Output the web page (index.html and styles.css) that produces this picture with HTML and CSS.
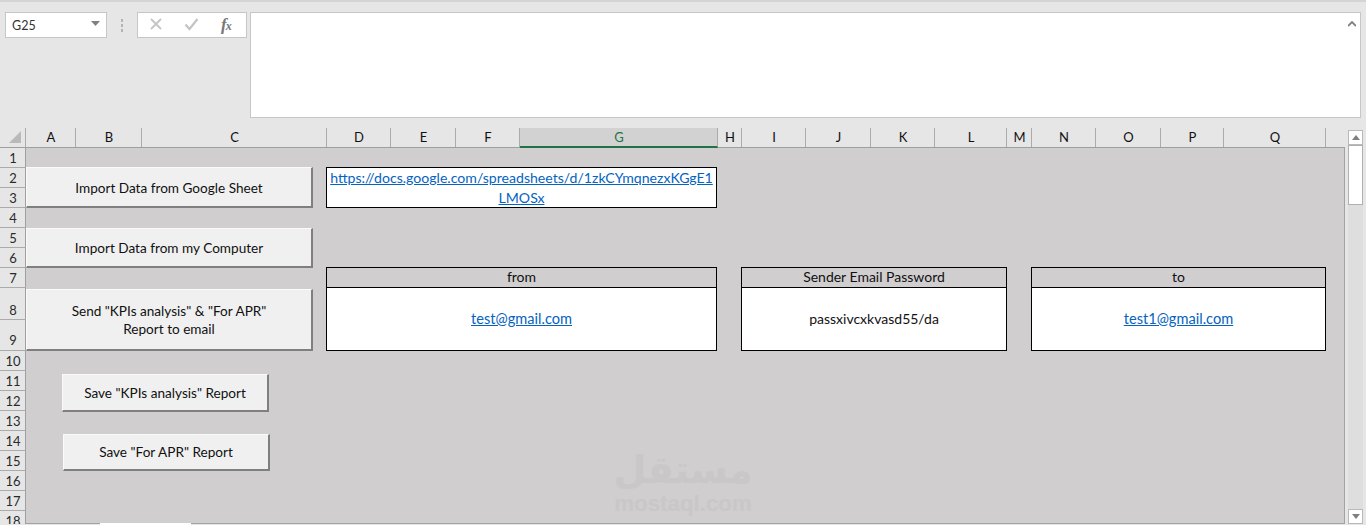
FILE: index.html
```html
<!DOCTYPE html>
<html lang="en">
<head>
<meta charset="utf-8">
<title>Excel sheet</title>
<link rel="stylesheet" href="styles.css">
</head>
<body>
<div class="app">
  <div class="formula-bar">
    <div class="namebox"><span>G25</span><svg class="caret" width="9" height="5" viewBox="0 0 9 5"><path d="M0 0h9L4.5 5z"/></svg></div>
    <div class="grip"><i></i><i></i><i></i></div>
    <div class="fx-box">
      <svg width="14" height="14" viewBox="0 0 14 14"><path d="M2 2l10 10M12 2L2 12" fill="none" stroke="#c4c4c4" stroke-width="1.8"/></svg>
      <svg width="15" height="14" viewBox="0 0 15 14"><path d="M1.5 7.5l4 4.5L13.5 2" fill="none" stroke="#c4c4c4" stroke-width="2.2"/></svg>
      <span class="fx">f<span class="fx-x">x</span></span>
    </div>
    <div class="formula-input"><svg width="8" height="6" viewBox="0 0 8 6"><path d="M0 5l4-4 4 4" fill="none" stroke="#808080" stroke-width="1.8"/></svg></div>
  </div>
  <div class="sheet-wrap">
    <div class="corner-row">
      <div class="corner"><svg width="14" height="14" viewBox="0 0 14 14"><path d="M13 1v12H1z" fill="#b9b9b9"/></svg></div>
      <div class="col-heads">
        <div class="ch">A</div><div class="ch">B</div><div class="ch">C</div><div class="ch">D</div><div class="ch">E</div><div class="ch">F</div><div class="ch active">G</div><div class="ch">H</div><div class="ch">I</div><div class="ch">J</div><div class="ch">K</div><div class="ch">L</div><div class="ch">M</div><div class="ch">N</div><div class="ch">O</div><div class="ch">P</div><div class="ch">Q</div>
      </div>
    </div>
    <div class="sheet-row">
      <div class="row-heads">
        <div class="rh">1</div><div class="rh">2</div><div class="rh">3</div><div class="rh">4</div><div class="rh">5</div><div class="rh">6</div><div class="rh">7</div><div class="rh r8">8</div><div class="rh r9">9</div><div class="rh">10</div><div class="rh">11</div><div class="rh">12</div><div class="rh">13</div><div class="rh">14</div><div class="rh">15</div><div class="rh">16</div><div class="rh">17</div><div class="rh">18</div>
      </div>
      <div class="cells">
        <a class="cell link url" href="#">https://docs.google.com/spreadsheets/d/1zkCYmqnezxKGgE1 LMOSx</a>
        <div class="cell head h-from">from</div>
        <div class="cell head h-pass">Sender Email Password</div>
        <div class="cell head h-to">to</div>
        <div class="cell val v-from"><a class="link email" href="#">test@gmail.com</a></div>
        <div class="cell val v-pass">passxivcxkvasd55/da</div>
        <div class="cell val v-to"><a class="link email" href="#">test1@gmail.com</a></div>
        <button class="btn b1">Import Data from Google Sheet</button>
        <button class="btn b2">Import Data from my Computer</button>
        <button class="btn b3">Send "KPIs analysis" &amp; "For APR"<br>Report to email</button>
        <button class="btn b4">Save "KPIs analysis" Report</button>
        <button class="btn b5">Save "For APR" Report</button>
        <div class="watermark"><div class="wm-ar" dir="rtl" lang="ar">مستقل</div><div class="wm-en">mostaql.com</div></div>
      </div>
      <div class="gutter"></div>
      <div class="vscroll">
        <div class="sb-btn"><svg width="8" height="5" viewBox="0 0 8 5"><path d="M4 0l4 5H0z"/></svg></div>
        <div class="sb-thumb"></div>
        <div class="sb-track"></div>
        <div class="sb-btn"><svg width="8" height="5" viewBox="0 0 8 5"><path d="M4 5L0 0h8z"/></svg></div>
      </div>
    </div>
    <div class="tabs"><div class="tab"></div></div>
  </div>
</div>
</body>
</html>
```
FILE: styles.css
```css
* { box-sizing: border-box; }
html, body { margin: 0; height: 525px; overflow: hidden; }
body { font-family: "Lato", "Liberation Sans", sans-serif; background: #e6e6e6; color: #111; }
.app { width: 1366px; height: 525px; display: flex; flex-direction: column; border-top: 2px solid #d4d4d4; }

.formula-bar { height: 126px; display: flex; align-items: flex-start; padding: 10px 5px 0 5px; }
.namebox { width: 102px; height: 26px; background: #fff; border: 1px solid #c6c6c6; display: flex; align-items: center; justify-content: space-between; padding: 0 6px; font-size: 12.5px; color: #333; }
.caret { fill: #808080; margin-bottom: 3px; }
.grip { width: 30px; height: 26px; display: flex; flex-direction: column; align-items: center; justify-content: center; gap: 2px; }
.grip i { width: 2px; height: 3px; background: #b4b4b4; }
.fx-box { width: 110px; height: 26px; background: #fff; border: 1px solid #c6c6c6; display: flex; align-items: center; gap: 21px; padding: 0 0 2px 11px; }
.fx { font-family: "Liberation Serif", serif; font-style: italic; font-weight: 700; font-size: 17px; color: #777; line-height: 1; margin-left: 1px; }
.fx-x { font-size: 12px; margin-left: -1px; }
.formula-input { width: 1111px; height: 106px; margin-left: 3px; background: #fff; border: 1px solid #c6c6c6; display: flex; justify-content: flex-end; padding: 8px 4px 0 0; }
.formula-input svg { display: block; }

.sheet-wrap { flex: 1; display: flex; flex-direction: column; min-height: 0; }
.corner-row { height: 20px; display: flex; }
.corner { width: 25px; display: flex; align-items: flex-end; justify-content: flex-end; padding: 0 3px 3px 0; border-bottom: 1px solid #9f9f9f; }
.col-heads { display: grid; grid-template-columns: 50px 66px 185px 64px 65px 64px 198px 24px 64px 65px 64px 72px 25px 64px 65px 63px 102px 19px; width: 1320px; border-bottom: 1px solid #9f9f9f; border-left: 1px solid #ababab; }
.ch { font-size: 13px; line-height: 19px; text-align: center; padding-left: 1px; border-right: 1px solid #ababab; color: #111; }
.ch.active { background: #d2d2d2; color: #217346; border-bottom: 2px solid #217346; height: 20px; margin-bottom: -1px; }

.sheet-row { flex: 1; min-height: 0; display: flex; }
.row-heads { width: 26px; display: grid; grid-template-rows: repeat(7, 20px) 32px 31px repeat(9, 20px); align-content: start; overflow: hidden; background: #e6e6e6; }
.rh { font-size: 13px; line-height: 21px; text-align: center; padding-left: 1px; border-bottom: 1px solid #ababab; border-right: 1px solid #9f9f9f; color: #2a2a2a; }
.rh.r8 { line-height: 44px; }
.rh.r9 { line-height: 41px; }

.cells { position: relative; width: 1319px; height: 376px; background: #d0cece; border-right: 1px solid #a3a3a3; border-bottom: 1px solid #a3a3a3; display: grid; grid-template-columns: 300px 391px 24px 266px 24px 295px; grid-template-rows: 19px 41px 59px 20px 64px; align-content: start; }
.cell { font-size: 14px; text-align: center; border: 1px solid #000; background: #fff; }
.link { color: #0563c1; text-decoration: underline; }
.url { grid-column: 2; grid-row: 2; font-size: 14.1px; line-height: 20px; overflow-wrap: anywhere; }
.email { font-size: 14.6px; }
.head { background: #d0cece; line-height: 18px; grid-row: 4; border-bottom: 0; }
.val { grid-row: 5; display: flex; align-items: center; justify-content: center; padding-bottom: 2px; }
.h-from, .v-from { grid-column: 2; }
.h-pass, .v-pass { grid-column: 4; }
.h-to, .v-to { grid-column: 6; }

.btn { position: absolute; font-family: inherit; font-size: 13.6px; color: #111; line-height: 18px; text-align: center; background: #f0f0f0; border: 0; border-top: 1px solid #fafafa; border-left: 1px solid #fafafa; border-right: 2px solid #7f7f7f; border-bottom: 2px solid #7f7f7f; padding: 0; }
.b1 { left: 0; top: 19px; width: 287px; height: 41px; padding-top: 1px; }
.b2 { left: 0; top: 80px; width: 287px; height: 40px; }
.b3 { left: 0; top: 141px; width: 287px; height: 62px; }
.b4 { left: 36px; top: 226px; width: 207px; height: 38px; }
.b5 { left: 37px; top: 286px; width: 207px; height: 37px; }

.watermark { position: absolute; left: 607px; top: 299px; width: 100px; display: flex; flex-direction: column; align-items: center; color: #c9c7c7; white-space: nowrap; }
.wm-ar { font-family: "DejaVu Sans", sans-serif; font-size: 38px; font-weight: 700; height: 47px; line-height: 47px; }
.wm-en { font-family: "Liberation Sans", sans-serif; font-weight: 700; font-size: 22.3px; height: 20px; line-height: 20px; }

.gutter { width: 3px; }
.vscroll { width: 15px; height: 394px; margin-top: -18px; display: flex; flex-direction: column; background: #dedede; }
.sb-btn { height: 15px; flex: none; background: #fff; border: 1px solid #b9b9b9; display: flex; align-items: center; justify-content: center; }
.sb-btn svg { fill: #808080; }
.sb-thumb { height: 60px; flex: none; background: #fff; border: 1px solid #b0b0b0; }
.sb-track { flex: 1; }

.tabs { height: 1px; position: relative; }
.tab { position: absolute; left: 100px; bottom: 0; width: 91px; height: 2px; background: #fff; }
```
